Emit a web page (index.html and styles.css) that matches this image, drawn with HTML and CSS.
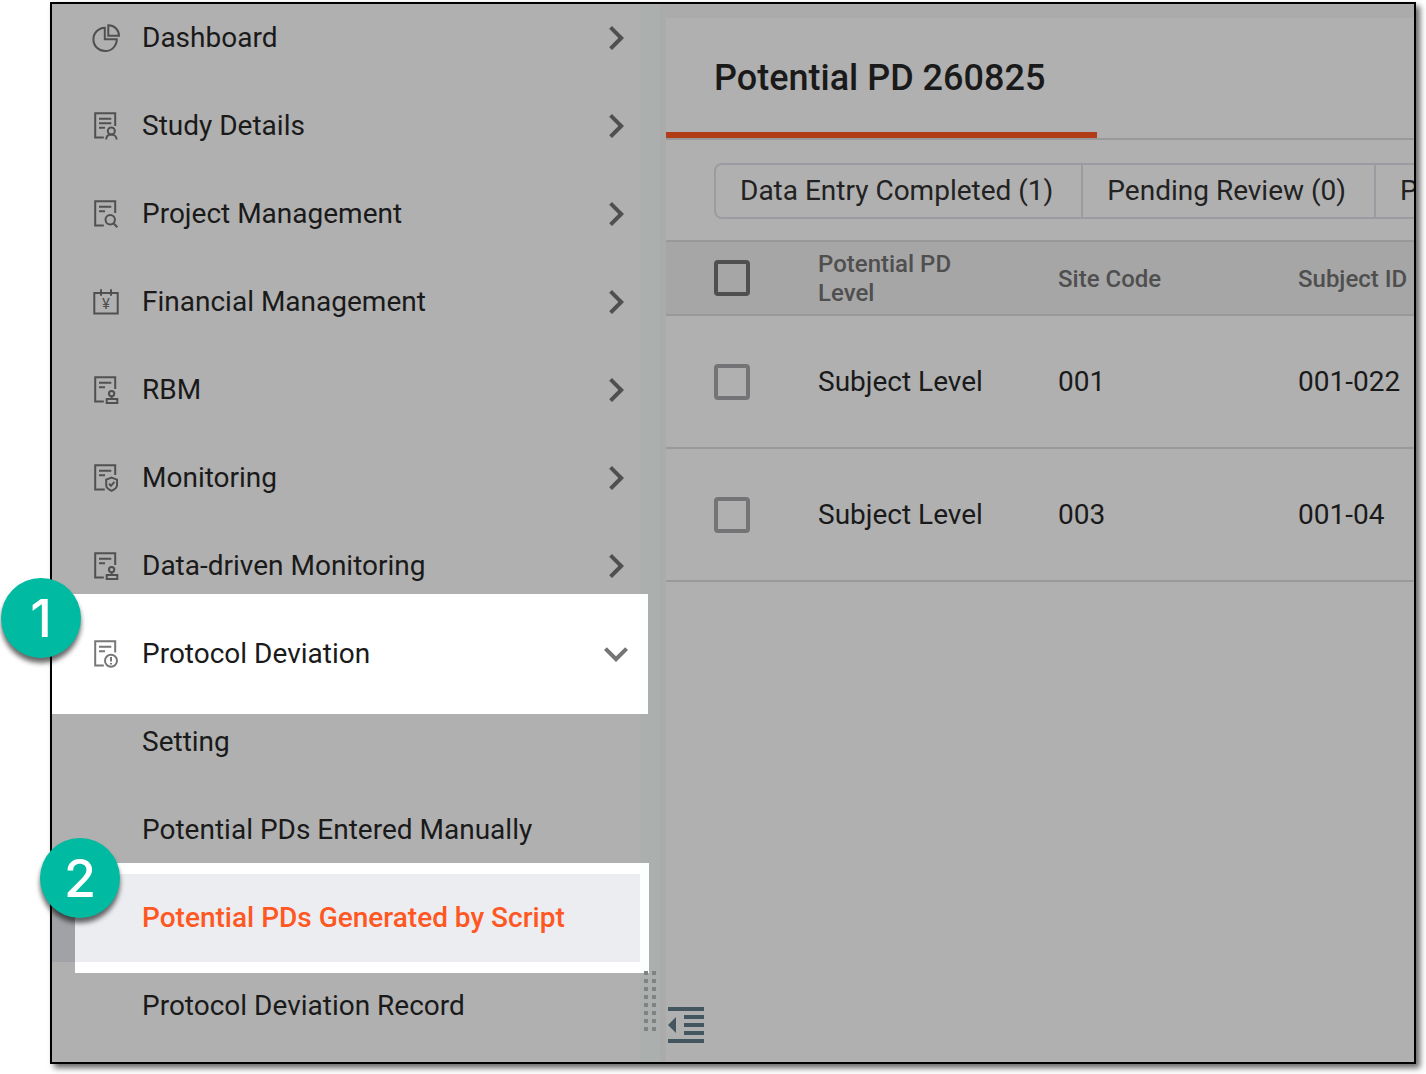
FILE: index.html
```html
<!DOCTYPE html>
<html lang="en">
<head>
    <meta charset="UTF-8">
    <meta name="viewport" content="width=device-width, initial-scale=1.0">
    <title>Potential PD</title>
    <link rel="stylesheet" href="styles.css">
</head>
<body>
    <svg class="sprite" aria-hidden="true">
        <symbol id="arrow-right" viewBox="0 0 24 24">
            <path d="M8.59 16.59L13.17 12 8.59 7.41 10 6l6 6-6 6z"/>
        </symbol>
        <symbol id="arrow-down" viewBox="0 0 24 24">
            <path d="M16.59 8.59L12 13.17 7.41 8.59 6 10l6 6 6-6z"/>
        </symbol>
        <symbol id="doc-stamp" viewBox="0 0 28 28">
            <path d="M23.2 13V1.3H3.2v24.2h8.6M7 6.8h12.3M7 11.2h6"/>
            <circle cx="19.6" cy="17.6" r="2.7"/>
            <path d="M19.6 20.3v2.6M14.7 23h10.6v4H14.7z"/>
        </symbol>
    </svg>

    <div class="frame">
        <nav class="sidebar">
            <ul class="menu">
                <li class="item">
                    <a href="#">
                        <svg class="icon" viewBox="0 0 28 28"><path d="M12.8 3.7A11.7 11.7 0 1 0 24.8 15.3h-12zM16.3 1.3v10.5H27A10.5 10.5 0 0 0 16.3 1.3z"/></svg>
                        <span>Dashboard</span>
                        <svg class="arrow"><use href="#arrow-right"/></svg>
                    </a>
                </li>
                <li class="item">
                    <a href="#">
                        <svg class="icon" viewBox="0 0 28 28"><path d="M23.2 14V1.3H3.2v24.2h8.6M7 6.8h12.3M7 11.2h12.3M7 15.7h6"/><circle cx="19.3" cy="19" r="3.5"/><path d="M14.2 27.5c0-3 2-5 5.1-5s5.3 2 5.3 5"/></svg>
                        <span>Study Details</span>
                        <svg class="arrow"><use href="#arrow-right"/></svg>
                    </a>
                </li>
                <li class="item">
                    <a href="#">
                        <svg class="icon" viewBox="0 0 28 28"><path d="M23.2 13V1.3H3.2v24.2h8.6M7 6.8h12.3M7 11.2h6"/><circle cx="18.2" cy="19.8" r="4.7"/><path d="M21.5 23.3l3.8 4"/></svg>
                        <span>Project Management</span>
                        <svg class="arrow"><use href="#arrow-right"/></svg>
                    </a>
                </li>
                <li class="item">
                    <a href="#">
                        <svg class="icon" viewBox="0 0 28 28"><path d="M2.3 5h23.4v20.4H2.3zM9 1.3v6.4M19 1.3v6.4"/><text x="14" y="21" text-anchor="middle">¥</text></svg>
                        <span>Financial Management</span>
                        <svg class="arrow"><use href="#arrow-right"/></svg>
                    </a>
                </li>
                <li class="item">
                    <a href="#">
                        <svg class="icon"><use href="#doc-stamp"/></svg>
                        <span>RBM</span>
                        <svg class="arrow"><use href="#arrow-right"/></svg>
                    </a>
                </li>
                <li class="item">
                    <a href="#">
                        <svg class="icon" viewBox="0 0 28 28"><path d="M23.2 11V1.3H3.2v24.2h9.6M7 6.8h12.3M7 11.2h6"/><path d="M19.6 13.6l5.4 2v5.6c0 2.6-2.2 4.2-5.4 5.6-3.2-1.4-5.4-3-5.4-5.6v-5.6zM17 19.8l2 2 3.4-4"/></svg>
                        <span>Monitoring</span>
                        <svg class="arrow"><use href="#arrow-right"/></svg>
                    </a>
                </li>
                <li class="item">
                    <a href="#">
                        <svg class="icon"><use href="#doc-stamp"/></svg>
                        <span>Data-driven Monitoring</span>
                        <svg class="arrow"><use href="#arrow-right"/></svg>
                    </a>
                </li>
                <li class="item open">
                    <a href="#">
                        <svg class="icon" viewBox="0 0 28 28"><path d="M23.2 12.5V1.3H3.2v24.2h8.6M7 6.8h12.3M7 11.2h6"/><circle cx="19" cy="20.7" r="6"/><path d="M19 17v4.6M19 23v1.6"/></svg>
                        <span>Protocol Deviation</span>
                        <svg class="arrow"><use href="#arrow-down"/></svg>
                    </a>
                    <div class="badge">1</div>
                </li>
                <li class="item sub"><a href="#"><span>Setting</span></a></li>
                <li class="item sub"><a href="#"><span>Potential PDs Entered Manually</span></a></li>
                <li class="item sub active">
                    <a href="#"><span>Potential PDs Generated by Script</span></a>
                    <div class="badge">2</div>
                </li>
                <li class="item sub"><a href="#"><span>Protocol Deviation Record</span></a></li>
            </ul>
        </nav>

        <div class="splitter"><div class="grip"></div></div>

        <main class="panel">
            <header class="tabs">
                <h1 class="tab">Potential PD 260825</h1>
            </header>
            <div class="filters">
                <button type="button">Data Entry Completed (1)</button>
                <button type="button">Pending Review (0)</button>
                <button type="button">P</button>
            </div>
            <table>
                <colgroup>
                    <col class="col-check">
                    <col>
                    <col>
                    <col>
                </colgroup>
                <thead>
                    <tr>
                        <th class="check"><input type="checkbox" aria-label="Select all"></th>
                        <th>Potential PD Level</th>
                        <th>Site Code</th>
                        <th>Subject ID</th>
                    </tr>
                </thead>
                <tbody>
                    <tr>
                        <td class="check"><input type="checkbox" aria-label="Select 001-022"></td>
                        <td>Subject Level</td>
                        <td>001</td>
                        <td>001-022</td>
                    </tr>
                    <tr>
                        <td class="check"><input type="checkbox" aria-label="Select 001-04"></td>
                        <td>Subject Level</td>
                        <td>003</td>
                        <td>001-04</td>
                    </tr>
                </tbody>
            </table>
            <button type="button" class="collapse" aria-label="Collapse menu">
                <svg viewBox="0 0 36 36"><path d="M0 0h36v4H0zM16 8h20v4H16zM16 16h20v4H16zM16 24h20v4H16zM0 32h36v4H0zM8 10v16L0 18z"/></svg>
            </button>
        </main>
    </div>
</body>
</html>
```
FILE: styles.css
```css
* {
    box-sizing: border-box;
}
body {
    margin: 0;
    padding: 2px 10px 10px 50px;
    min-height: 100vh;
    display: flex;
    background: #fff;
    color: #1a1a1a;
    font-family: Roboto, sans-serif;
    font-size: 28px;
}
.sprite {
    position: absolute;
    width: 0;
    height: 0;
}
.frame {
    flex: 1;
    min-width: 0;
    display: flex;
    border: 2px solid #000;
    background: #ababab;
    box-shadow: 4px 4px 6px rgba(0,0,0,0.6);
}

/* side menu */
.sidebar {
    position: relative;
    z-index: 1;
    flex: 0 0 588px;
    background: #b0b0b0;
}
.menu {
    list-style: none;
    margin: -10px 0 0;
    padding: 0;
}
.item {
    position: relative;
}
.item a {
    position: relative;
    z-index: 1;
    display: flex;
    align-items: center;
    height: 88px;
    padding-left: 40px;
    color: inherit;
    text-decoration: none;
}
.item span {
    padding-bottom: 2px;
}
.item.sub a {
    padding-left: 90px;
}
.icon {
    width: 28px;
    height: 28px;
    margin-right: 22px;
    fill: none;
    stroke: #505050;
    stroke-width: 2;
    overflow: visible;
}
.icon text {
    font-size: 15px;
    fill: #505050;
    stroke: none;
}
.arrow {
    width: 48px;
    height: 48px;
    margin-left: auto;
    fill: #4f4f4f;
}

/* highlighted rows, they reach over the splitter */
.open::before,
.active::before {
    content: "";
    position: absolute;
    background: #fff;
    border-right: 8px solid #fbfffd;
}
.open::before {
    inset: -16px -8px -16px 0;
}
.active::before {
    inset: -11px -9px -11px 23px;
}
.active::after {
    content: "";
    position: absolute;
    inset: 0 0 0 23px;
    background: #ecedf1;
}
.open .icon {
    stroke: #777;
}
.open .arrow {
    fill: #757575;
}
.active {
    background: #a1a2a5;
}
.active a {
    color: #ff5722;
    font-weight: 500;
}
.badge {
    position: absolute;
    z-index: 2;
    width: 80px;
    height: 80px;
    border-radius: 50%;
    background: #00baa2;
    box-shadow: 0 5px 5px rgba(0,0,0,0.6);
    color: #fff;
    font: 500 52px/82px Inter, sans-serif;
    text-align: center;
}
.open .badge {
    left: -51px;
    top: -32px;
}
.active .badge {
    left: -12px;
    top: -36px;
}

.splitter {
    flex: 0 0 20px;
    display: flex;
    align-items: flex-end;
    padding: 0 4px 31px;
    background: #abafad;
}
.grip {
    position: relative;
    z-index: 2;
    width: 12px;
    height: 60px;
    background: conic-gradient(at 4px 4px, transparent 75%, #828282 0) 0 0 / 8px 8px;
}

/* content */
.panel {
    flex: 1;
    min-width: 0;
    display: flex;
    flex-direction: column;
    align-items: flex-start;
    margin: 14px 0 0 6px;
    background: #b0b0b0;
    overflow: hidden;
}
.tabs {
    display: flex;
    align-self: stretch;
    border-bottom: 2px solid #999;
}
.tab {
    margin: 0;
    padding: 0 52px 0 48px;
    height: 120px;
    line-height: 120px;
    border-bottom: 6px solid #b03c18;
    font-size: 36px;
    font-weight: 500;
}
.filters {
    display: flex;
    padding: 23px 48px 21px;
}
.filters button {
    height: 56px;
    padding: 0 28px 2px 24px;
    border: 2px solid #9b9ba1;
    border-right-width: 0;
    background: none;
    color: #222;
    font: inherit;
    white-space: nowrap;
}
.filters button:first-child {
    border-radius: 8px 0 0 8px;
}
table {
    width: 848px;
    table-layout: fixed;
    border-collapse: separate;
    border-spacing: 0;
}
.col-check {
    width: 128px;
}
th, td {
    padding: 0 24px;
    border-bottom: 2px solid #999;
    text-align: left;
}
th {
    height: 76px;
    padding-top: 2px;
    border-top: 2px solid #999;
    background: #a6a6a6;
    color: #4f4f4f;
    font-size: 24px;
    font-weight: 500;
    line-height: 29px;
}
td {
    height: 133px;
}
.check {
    padding: 0 0 0 48px;
}
.check input {
    appearance: none;
    display: block;
    width: 36px;
    height: 36px;
    margin: 0;
    border: 4px solid #747476;
    border-radius: 4px;
}
th.check input {
    border-color: #4f4f4f;
}
.collapse {
    margin: auto 0 19px 2px;
    padding: 0;
    border: none;
    background: none;
    cursor: pointer;
}
.collapse svg {
    display: block;
    width: 36px;
    height: 36px;
    fill: #435660;
}
```
